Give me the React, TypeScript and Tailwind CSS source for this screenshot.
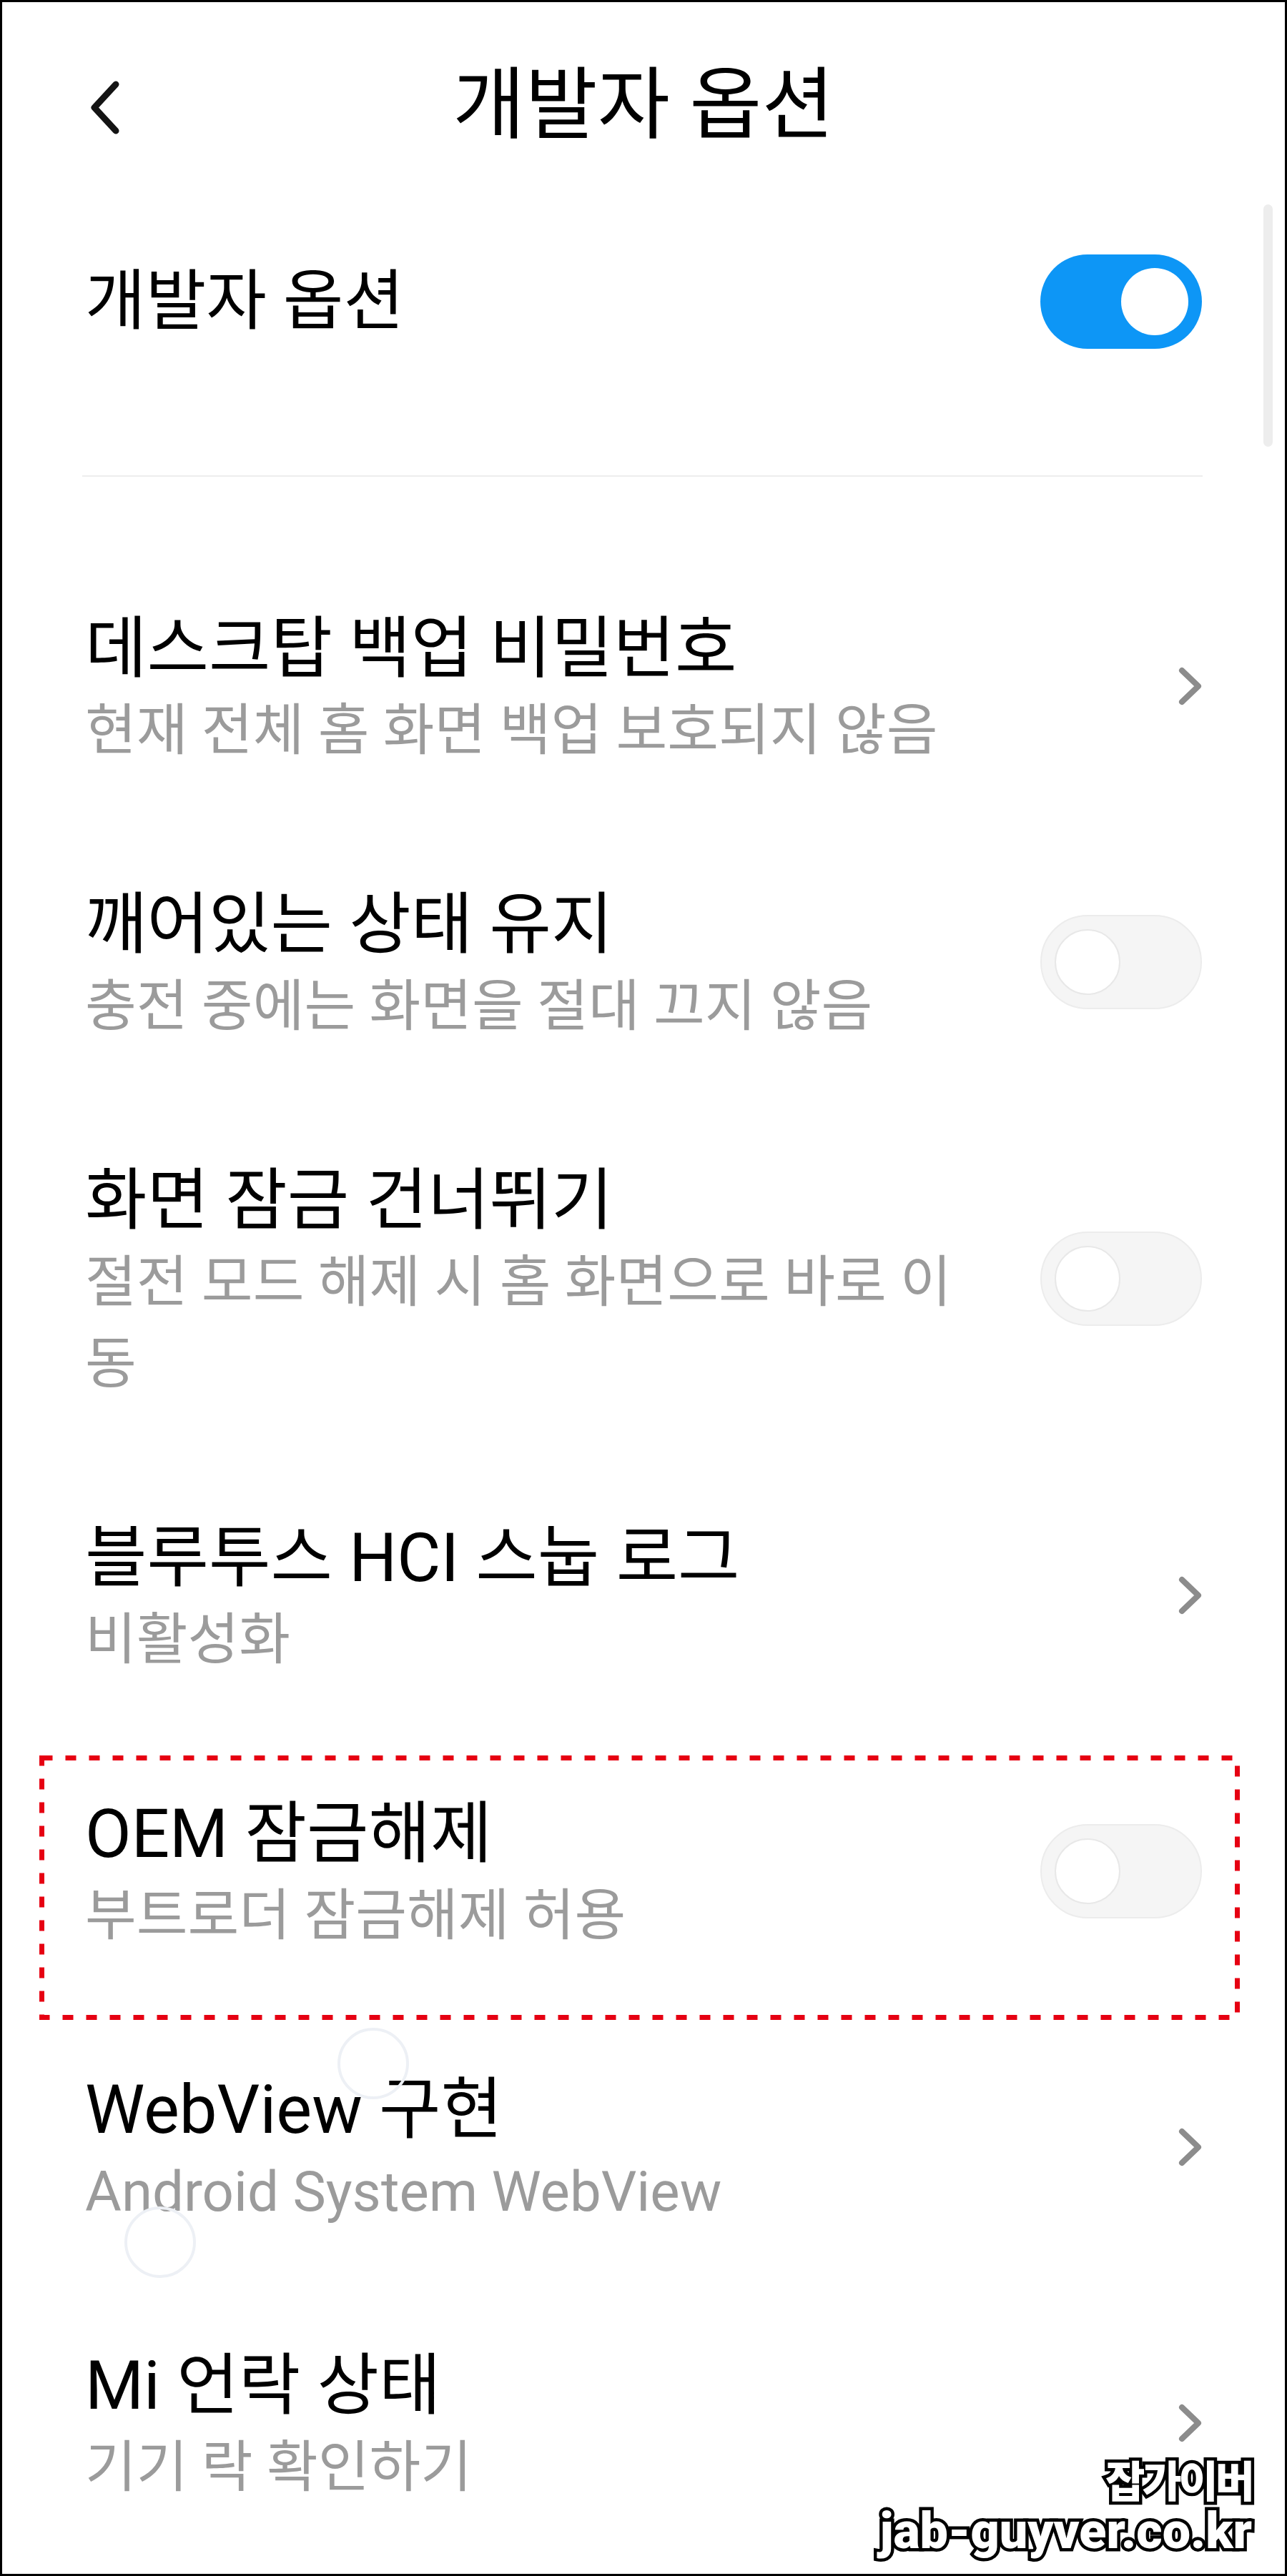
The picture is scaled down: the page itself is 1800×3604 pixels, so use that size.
import React from 'react';

type Item = {
  title: string;
  sub: string[];
  right: 'chevron' | 'toggle';
  marked?: boolean;
};

const items: Item[] = [
  { title: '데스크탑 백업 비밀번호', sub: ['현재 전체 홈 화면 백업 보호되지 않음'], right: 'chevron' },
  { title: '깨어있는 상태 유지', sub: ['충전 중에는 화면을 절대 끄지 않음'], right: 'toggle' },
  { title: '화면 잠금 건너뛰기', sub: ['절전 모드 해제 시 홈 화면으로 바로 이', '동'], right: 'toggle' },
  { title: '블루투스 HCI 스눕 로그', sub: ['비활성화'], right: 'chevron' },
  { title: 'OEM 잠금해제', sub: ['부트로더 잠금해제 허용'], right: 'toggle', marked: true },
  { title: 'WebView 구현', sub: ['Android System WebView'], right: 'chevron' },
  { title: 'Mi 언락 상태', sub: ['기기 락 확인하기'], right: 'chevron' },
];

const Toggle: React.FC<{ on?: boolean }> = ({ on }) =>
  on ? (
    <div className="flex h-[132px] w-[226px] shrink-0 items-center justify-end rounded-full bg-[#0d96f6] pr-[19px]">
      <div className="size-[94px] rounded-full bg-white" />
    </div>
  ) : (
    <div className="flex h-[132px] w-[226px] shrink-0 items-center rounded-full border-2 border-[#ececec] bg-[#f5f5f5] pl-[18px]">
      <div className="size-[92px] rounded-full border-2 border-[#e8e8e8] bg-white" />
    </div>
  );

const Chevron: React.FC = () => (
  <svg width="33" height="54" viewBox="0 0 33 54" className="shrink-0">
    <path d="M5 5 L28 27 L5 49" fill="none" stroke="#8c8c8c" strokeWidth="8" strokeLinecap="round" strokeLinejoin="round" />
  </svg>
);

const Row: React.FC<{ item: Item }> = ({ item }) => (
  <div className="relative flex items-center px-[116px]">
    <div className="flex-1 pt-[75px] pb-[81px]">
      <div className="h-[116px] whitespace-nowrap text-[94px] leading-[116px] text-black">{item.title}</div>
      {item.sub.map((line, i) => (
        <div key={i} className="h-[114px] whitespace-nowrap text-[78px] leading-[114px] text-[#9b9b9b]">
          {line}
        </div>
      ))}
    </div>
    <div className="mb-[16px]">{item.right === 'toggle' ? <Toggle /> : <Chevron />}</div>
    {item.marked && (
      <svg width="1679" height="370" className="absolute left-[52px] top-[23px]">
        <rect x="3.5" y="3.5" width="1672" height="363" fill="none" stroke="#e60012" strokeWidth="7" strokeDasharray="15 18" />
      </svg>
    )}
  </div>
);

export default function App() {
  return (
    <div className="relative h-[3604px] w-[1800px] overflow-hidden border-[3px] border-black bg-white [font-family:Roboto,'Noto_Sans_CJK_KR',sans-serif]">
      {/* header */}
      <div className="grid h-[289px] grid-cols-[1fr_auto_1fr] items-center">
        <div className="pl-[123px] pt-[6px]">
          <svg width="42" height="75" viewBox="0 0 42 75">
            <path d="M36 5 L6 37.5 L36 70" fill="none" stroke="#141414" strokeWidth="9" strokeLinecap="round" strokeLinejoin="round" />
          </svg>
        </div>
        <div className="whitespace-nowrap text-[110px] leading-[130px] text-black">개발자 옵션</div>
        <div />
      </div>

      {/* master switch */}
      <div className="flex h-[260px] items-center justify-between px-[116px]">
        <div className="text-[92px] leading-[110px] text-black">개발자 옵션</div>
        <Toggle on />
      </div>

      <div className="ml-[112px] mr-[115px] mt-[113px] h-[2px] bg-[#ededed]" />

      <div className="mt-[108px]">
        {items.map((it, i) => (
          <Row key={i} item={it} />
        ))}
      </div>

      {/* scrollbar */}
      <div className="absolute left-[1764px] top-[283px] h-[339px] w-[13px] rounded-full bg-[#ededed]" />

      {/* touch ghosts */}
      <div className="absolute left-[469px] top-[2834px] size-[100px] rounded-full border-4 border-[#edf0f5]" />
      <div className="absolute left-[171px] top-[3084px] size-[100px] rounded-full border-4 border-[#edf0f5]" />

      {/* watermark */}
      <div className="absolute bottom-[24px] right-[46px] flex flex-col items-end gap-[6px] font-black text-white [paint-order:stroke_fill] [-webkit-text-stroke:9px_black]">
        <div className="text-[60px] leading-[62px] tracking-[-4px] [font-family:'Noto_Sans_CJK_KR',sans-serif]">잡가이버</div>
        <div className="text-[70px] leading-[72px] tracking-[0px] [font-family:Roboto,sans-serif]">jab-guyver.co.kr</div>
      </div>
    </div>
  );
}
